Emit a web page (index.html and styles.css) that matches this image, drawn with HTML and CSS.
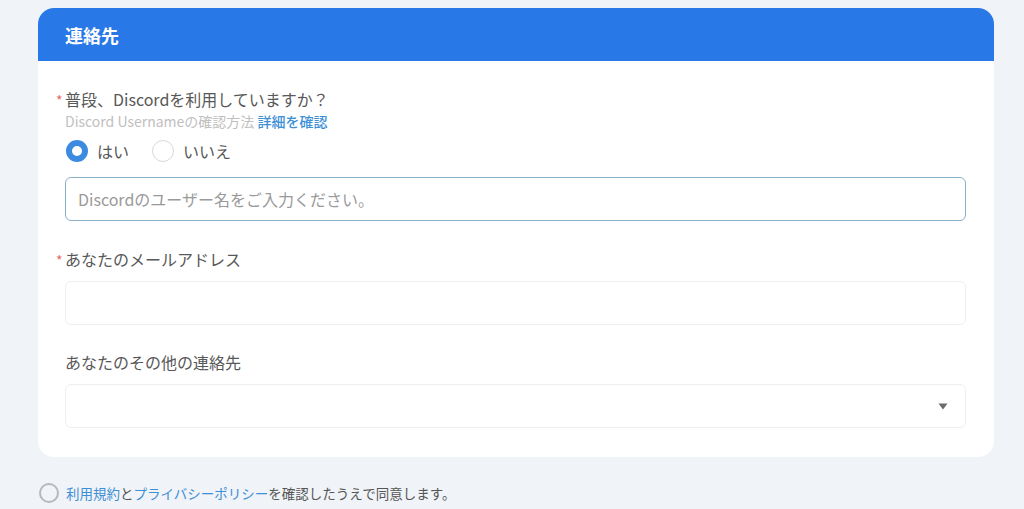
FILE: index.html
```html
<!DOCTYPE html>
<html lang="ja">
<head>
<meta charset="utf-8">
<link rel="stylesheet" href="styles.css">
</head>
<body>
<div class="page">
  <section class="card">
    <header class="card-head">連絡先</header>
    <div class="card-body">
      <div class="field first">
        <div class="label"><span class="req">*</span>普段、Discordを利用していますか？</div>
        <div class="hint">Discord Usernameの確認方法 <a class="hint-link">詳細を確認</a></div>
        <div class="radios">
          <label class="radio"><span class="dot on"></span>はい</label>
          <label class="radio"><span class="dot"></span>いいえ</label>
        </div>
        <div class="input active"><span class="ph">Discordのユーザー名をご入力ください。</span></div>
      </div>
      <div class="field">
        <div class="label"><span class="req">*</span>あなたのメールアドレス</div>
        <div class="input"></div>
      </div>
      <div class="field last">
        <div class="label">あなたのその他の連絡先</div>
        <div class="input select">
          <svg class="caret" width="10" height="7" viewBox="0 0 10 7"><path d="M0.5 0.5 H9.5 L5 6.5 Z" fill="#6b6b6b"/></svg>
        </div>
      </div>
    </div>
  </section>
  <div class="agree">
    <span class="check"></span>
    <span><a class="lnk">利用規約</a>と<a class="lnk">プライバシーポリシー</a>を確認したうえで同意します。</span>
  </div>
</div>
</body>
</html>
```
FILE: styles.css
```css
* { box-sizing: border-box; }
html, body { margin: 0; padding: 0; }
body {
  background: #f0f3f7;
  font-family: "Noto Sans CJK JP", "Noto Sans", sans-serif;
  color: #555;
  width: 1024px;
  height: 509px;
  overflow: hidden;
}
.page { padding: 8px 30px 0 38px; }
.card {
  width: 956px;
  background: #fff;
  border-radius: 16px;
  overflow: hidden;
}
.card-head {
  height: 53px;
  background: #2878e8;
  color: #fff;
  font-weight: 700;
  font-size: 18px;
  padding-left: 27px;
  display: flex;
  align-items: center;
}
.card-body { padding: 27px 28px 29px 27px; }
.field { margin-bottom: 26px; }
.field.first { margin-bottom: 27px; }
.field.last { margin-bottom: 0; }
.label {
  position: relative;
  font-size: 16px;
  line-height: 22px;
  color: #585858;
  margin-bottom: 11px;
}
.req {
  position: absolute;
  left: -9px;
  top: 1px;
  color: #e26a6a;
  font-size: 14px;
}
.field.first .label { margin-bottom: 1px; }
.hint {
  font-size: 14px;
  line-height: 20px;
  color: #c0c0c0;
}
.hint-link { color: #3d8fd6; font-weight: 500; }
.radios {
  display: flex;
  gap: 22px;
  height: 22px;
  margin-top: 9px;
  margin-bottom: 15px;
  align-items: center;
}
.radio {
  display: flex;
  align-items: center;
  font-size: 16px;
  color: #585858;
  margin-left: 1px;
}
.dot {
  width: 22px;
  height: 22px;
  border-radius: 50%;
  border: 1px solid #d8d8d8;
  margin-right: 9px;
  background: #fff;
}
.dot.on { border: 6px solid #3d8be0; }
.input {
  height: 44px;
  border: 1px solid #eeeeee;
  border-radius: 6px;
  display: flex;
  align-items: center;
  padding-left: 12px;
  position: relative;
}
.input.active { border-color: #8ab0c8; }
.ph { font-size: 16px; color: #9a9a9a; }
.select { justify-content: flex-end; padding-right: 17px; }
.caret { display: block; }
.agree {
  margin-top: 26px;
  display: flex;
  align-items: center;
  font-size: 13.5px;
  color: #555;
  margin-left: 1px;
}
.check {
  width: 20px;
  height: 20px;
  border-radius: 50%;
  border: 2px solid #b8b8b8;
  margin-right: 7px;
}
.lnk { color: #3d8fd6; }
```
